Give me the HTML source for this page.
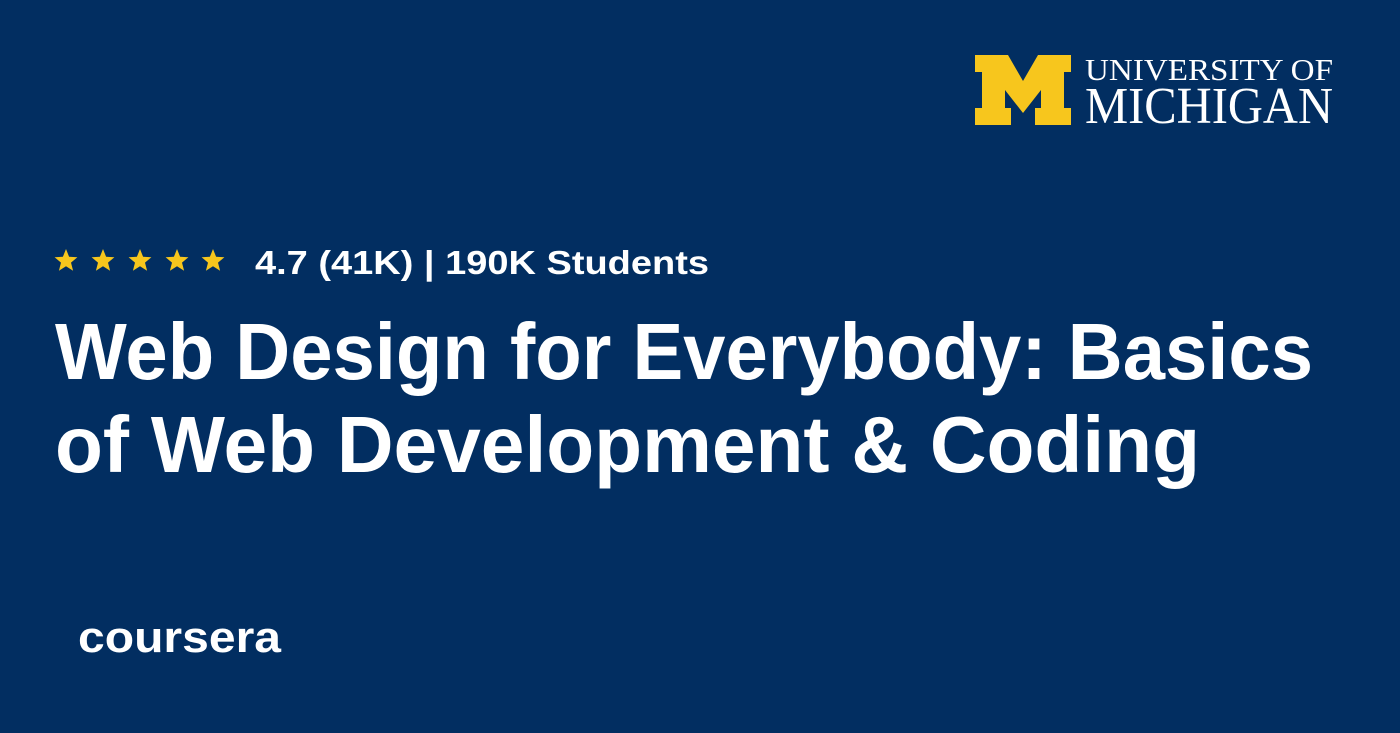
<!DOCTYPE html>
<html><head><meta charset="utf-8"><style>
html,body{margin:0;padding:0;background:#022e61;}
svg{display:block}
</style></head><body>
<svg width="1400" height="733" viewBox="0 0 1400 733" xmlns="http://www.w3.org/2000/svg">
<rect width="1400" height="733" fill="#022e61"/>
<g transform="translate(975,55)">
<polygon fill="#f7c61d" points="0,0 33,0 48,26 63,0 96,0 96,17 89,17 89,53 96,53 96,70 60,70 60,53 66,53 66,35 48,58 30,35 30,53 36,53 36,70 0,70 0,53 7,53 7,17 0,17"/>
</g>
<text x="1085" y="80" font-family="Liberation Serif, serif" font-size="31" fill="#fff" textLength="248" lengthAdjust="spacingAndGlyphs">UNIVERSITY OF</text>
<text x="1085" y="123" font-family="Liberation Serif, serif" font-size="52" fill="#fff" textLength="248" lengthAdjust="spacingAndGlyphs">MICHIGAN</text>
<g fill="#f7c61d">
<polygon id="s" points="0,-12 3.1,-4.2 11.4,-3.7 5,1.6 7.1,9.7 0,5.2 -7.1,9.7 -5,1.6 -11.4,-3.7 -3.1,-4.2" transform="translate(66,261)"/>
<polygon points="0,-12 3.1,-4.2 11.4,-3.7 5,1.6 7.1,9.7 0,5.2 -7.1,9.7 -5,1.6 -11.4,-3.7 -3.1,-4.2" transform="translate(103,261)"/>
<polygon points="0,-12 3.1,-4.2 11.4,-3.7 5,1.6 7.1,9.7 0,5.2 -7.1,9.7 -5,1.6 -11.4,-3.7 -3.1,-4.2" transform="translate(140,261)"/>
<polygon points="0,-12 3.1,-4.2 11.4,-3.7 5,1.6 7.1,9.7 0,5.2 -7.1,9.7 -5,1.6 -11.4,-3.7 -3.1,-4.2" transform="translate(177,261)"/>
<polygon points="0,-12 3.1,-4.2 11.4,-3.7 5,1.6 7.1,9.7 0,5.2 -7.1,9.7 -5,1.6 -11.4,-3.7 -3.1,-4.2" transform="translate(213,261)"/>
</g>
<text x="255" y="274" font-family="Liberation Sans, sans-serif" font-weight="bold" font-size="33" fill="#fff" textLength="454" lengthAdjust="spacingAndGlyphs">4.7 (41K) | 190K Students</text>
<text x="55" y="379" font-family="Liberation Sans, sans-serif" font-weight="bold" font-size="80" fill="#fff" textLength="1258" lengthAdjust="spacingAndGlyphs">Web Design for Everybody: Basics</text>
<text x="55" y="472" font-family="Liberation Sans, sans-serif" font-weight="bold" font-size="80" fill="#fff" textLength="1145" lengthAdjust="spacingAndGlyphs">of Web Development &amp; Coding</text>
<text x="78" y="652" font-family="Liberation Sans, sans-serif" font-weight="bold" font-size="44" fill="#fff" textLength="203" lengthAdjust="spacingAndGlyphs">coursera</text>
</svg>
</body></html>
